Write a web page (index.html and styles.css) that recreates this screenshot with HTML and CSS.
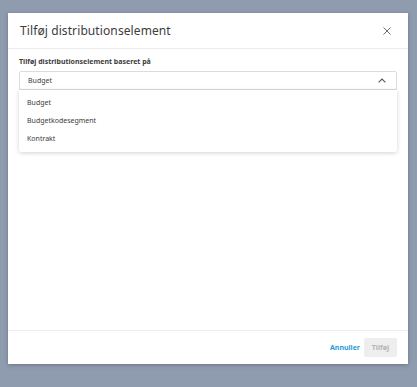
FILE: index.html
```html
<!DOCTYPE html>
<html>
<head>
  <meta charset="utf-8">
  <title>Tilføj distributionselement</title>
  <link rel="stylesheet" href="styles.css">
</head>
<body>
  <div class="modal">
    <div class="modal-header">
      <h1>Tilføj distributionselement</h1>
      <button class="close" aria-label="Luk">
        <svg width="8" height="8" viewBox="0 0 8 8"><path d="M0.5 0.5 L7.5 7.5 M7.5 0.5 L0.5 7.5" stroke="#6b6b6b" stroke-width="1" fill="none"/></svg>
      </button>
    </div>
    <div class="modal-body">
      <div class="field-label">Tilføj distributionselement baseret på</div>
      <div class="select">
        <div class="select-box">
          <span>Budget</span>
          <svg width="8" height="5" viewBox="0 0 8 5"><path d="M0.6 4.4 L4 1 L7.4 4.4" stroke="#555" stroke-width="1.1" fill="none"/></svg>
        </div>
        <ul class="menu">
          <li>Budget</li>
          <li>Budgetkodesegment</li>
          <li>Kontrakt</li>
        </ul>
      </div>
    </div>
    <div class="modal-footer">
      <button class="link-btn">Annuller</button>
      <button class="primary" disabled>Tilføj</button>
    </div>
  </div>
</body>
</html>
```

FILE: styles.css
```css
* {
  margin: 0;
  padding: 0;
  box-sizing: border-box;
}

body {
  font-family: 'Noto Sans', Arial, sans-serif;
  background: #8f9cb0;
  color: #3c3c3c;
  width: 417px;
  height: 387px;
  padding: 13px 9px 0 8px;
  overflow: hidden;
}

.modal {
  background: white;
  height: 351px;
  display: flex;
  flex-direction: column;
  box-shadow: 0 1px 4px rgba(0, 0, 0, 0.25);
}

.modal-header {
  height: 36px;
  display: flex;
  align-items: center;
  justify-content: space-between;
  padding: 0 17px 0 12px;
  border-bottom: 1px solid #ececec;
}

.modal-header h1 {
  font-size: 12px;
  font-weight: normal;
  color: #3c3c3c;
  letter-spacing: 0.1px;
}

.close {
  background: none;
  border: none;
  display: flex;
}

.modal-body {
  flex: 1;
  padding: 8px 11px 0 11px;
}

.field-label {
  font-size: 7px;
  line-height: 10px;
  font-weight: bold;
  color: #3c3c3c;
}

.select {
  margin-top: 4px;
}

.select-box {
  height: 19px;
  border: 1px solid #dcdcdc;
  border-radius: 2px 2px 0 0;
  display: flex;
  align-items: center;
  justify-content: space-between;
  padding: 0 10px 0 8px;
  font-size: 7px;
  color: #3c3c3c;
}

.menu {
  list-style: none;
  box-shadow: 0 1px 4px rgba(0, 0, 0, 0.18);
  padding: 4px 0 4px;
  border-radius: 0 0 2px 2px;
}

.menu li {
  font-size: 7px;
  color: #3c3c3c;
  height: 18px;
  line-height: 18px;
  padding-left: 8px;
}

.modal-footer {
  height: 34px;
  border-top: 1px solid #ececec;
  display: flex;
  align-items: center;
  justify-content: flex-end;
  gap: 4px;
  padding: 0 11px 0 0;
}

button {
  font-family: inherit;
  cursor: pointer;
}

.link-btn {
  background: none;
  border: none;
  color: #2a9bd8;
  font-size: 7px;
  font-weight: bold;
}

.primary {
  width: 33px;
  height: 19px;
  background: #eeeeee;
  border: none;
  border-radius: 2px;
  color: #b4b4b4;
  font-size: 7px;
  font-weight: bold;
}
```
